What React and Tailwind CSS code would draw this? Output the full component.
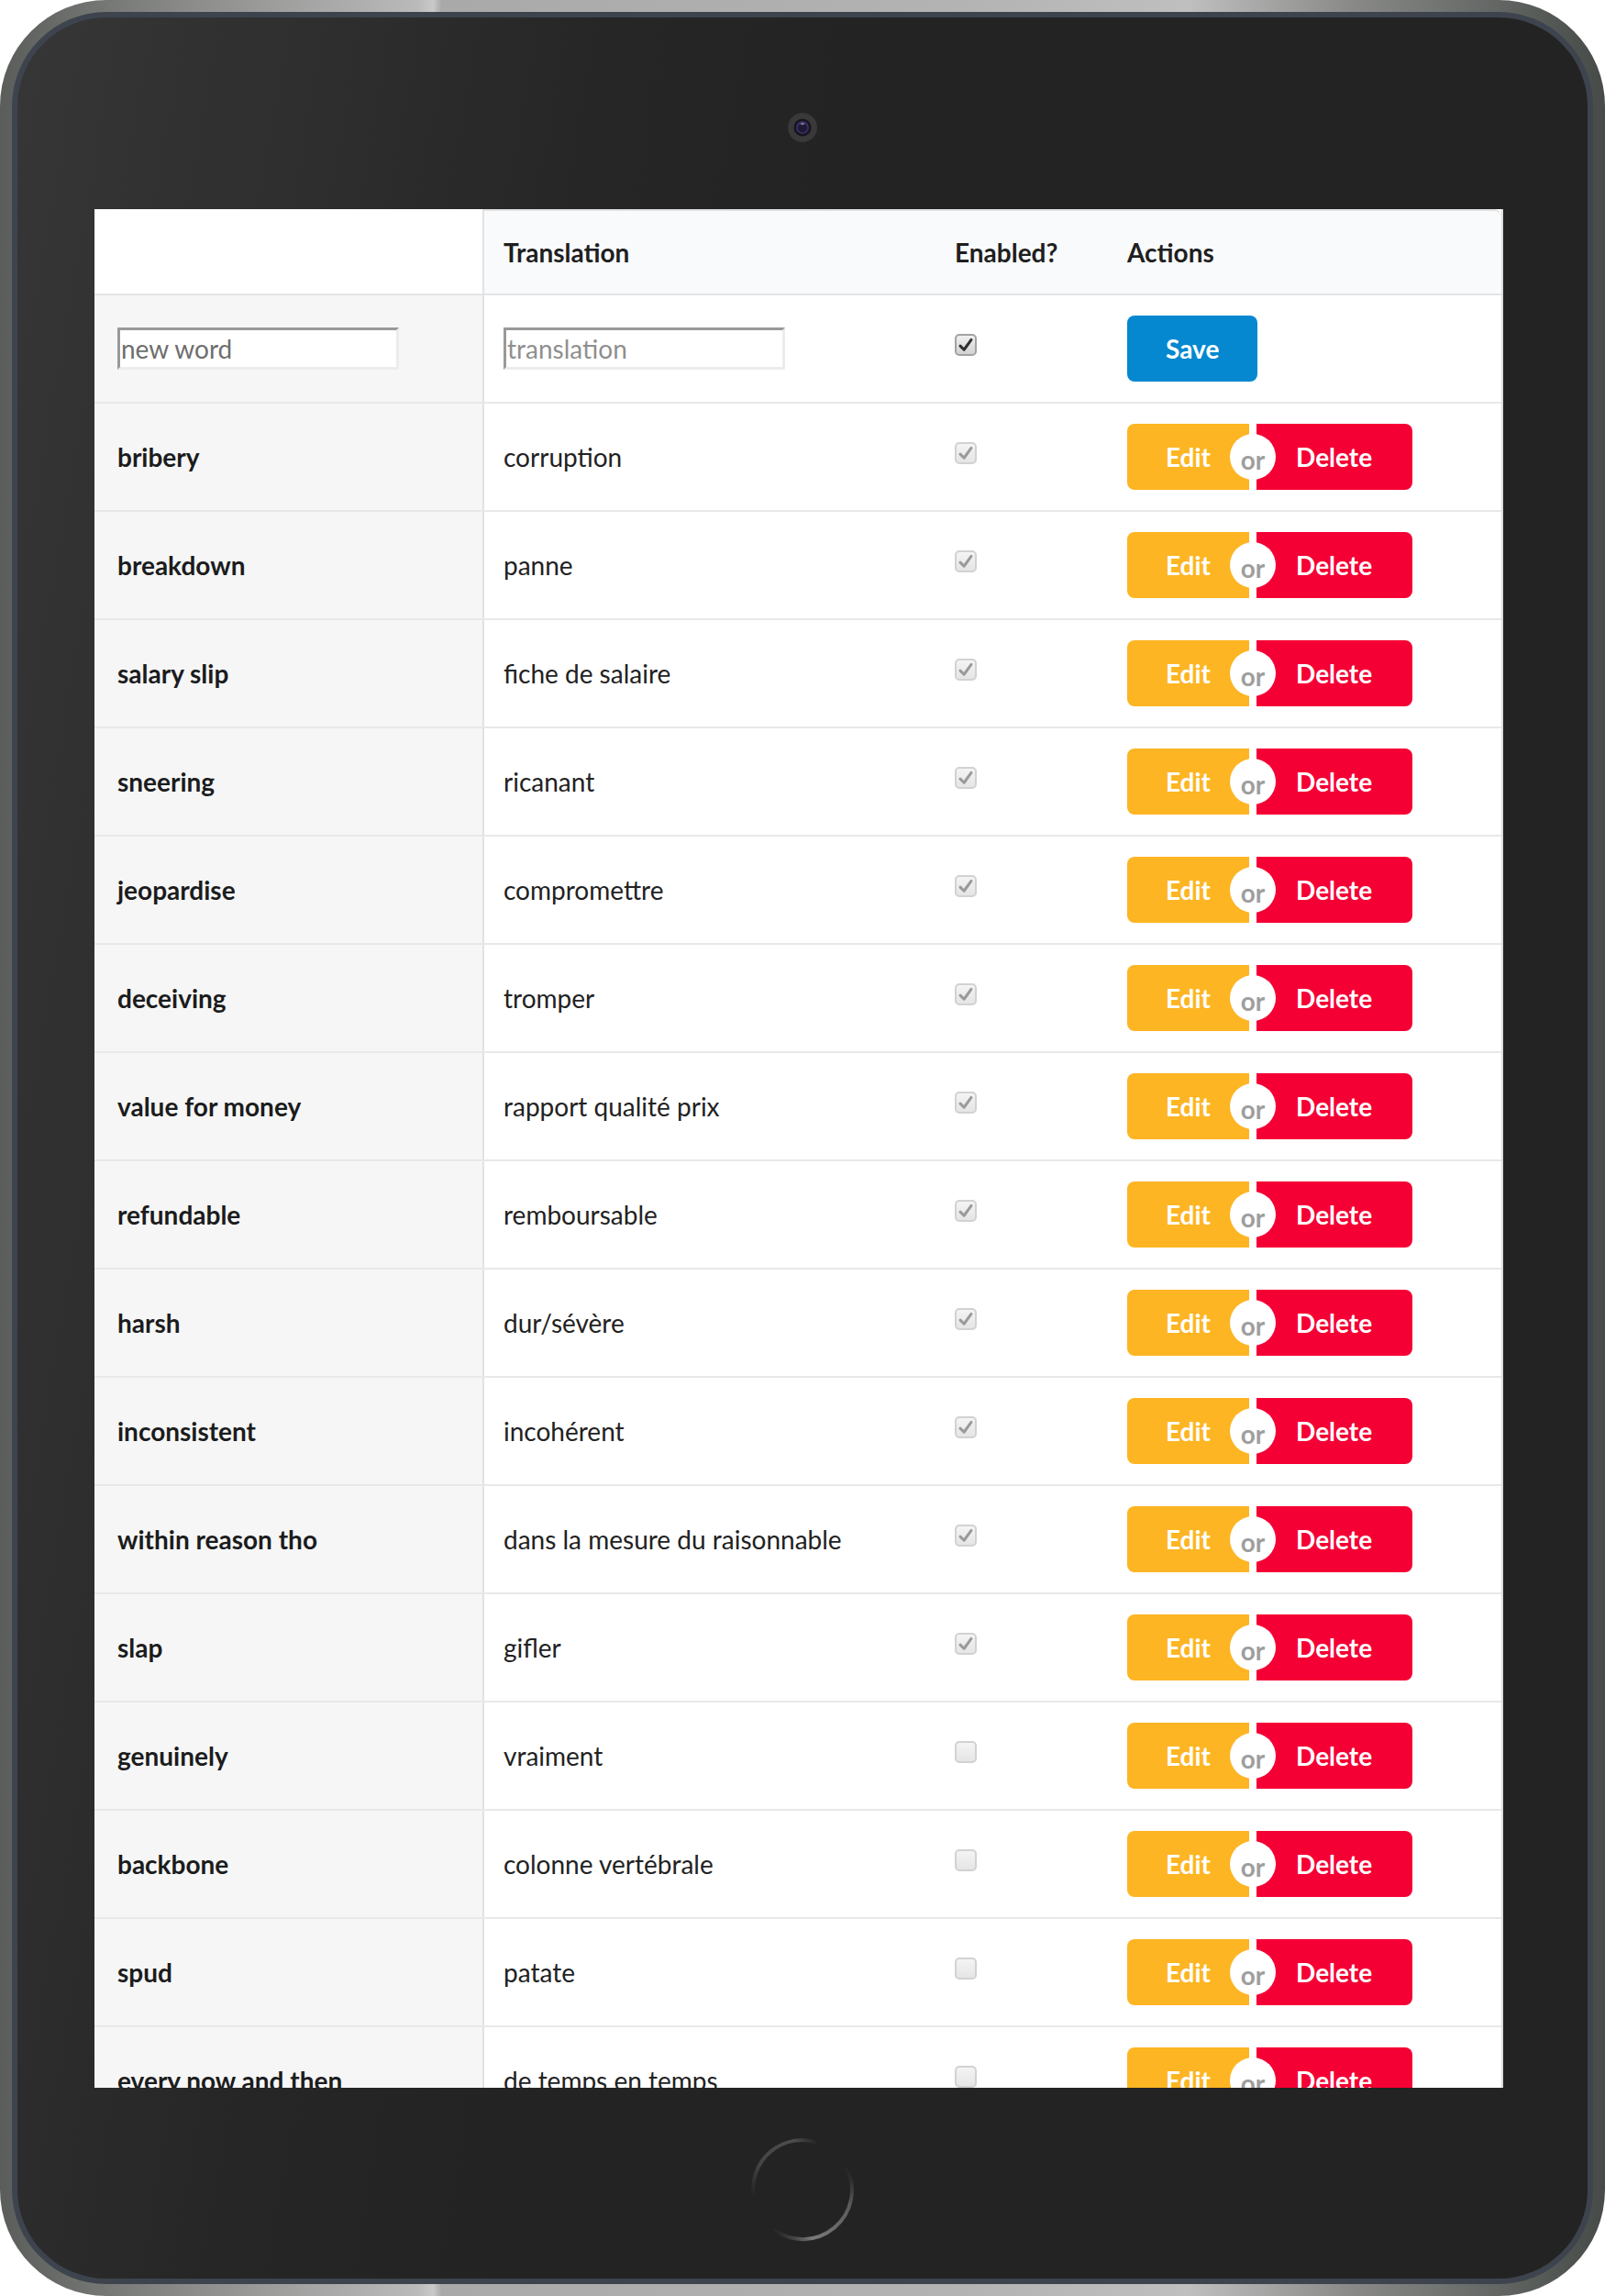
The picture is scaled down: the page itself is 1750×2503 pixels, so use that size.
const words = [
  ['bribery', 'corruption', true],
  ['breakdown', 'panne', true],
  ['salary slip', 'fiche de salaire', true],
  ['sneering', 'ricanant', true],
  ['jeopardise', 'compromettre', true],
  ['deceiving', 'tromper', true],
  ['value for money', 'rapport qualité prix', true],
  ['refundable', 'remboursable', true],
  ['harsh', 'dur/sévère', true],
  ['inconsistent', 'incohérent', true],
  ['within reason tho', 'dans la mesure du raisonnable', true],
  ['slap', 'gifler', true],
  ['genuinely', 'vraiment', false],
  ['backbone', 'colonne vertébrale', false],
  ['spud', 'patate', false],
  ['every now and then', 'de temps en temps', false],
];

const CheckBox = ({ checked, disabled }) => (
  <span
    className={
      disabled
        ? 'flex h-[24px] w-[24px] items-center justify-center rounded-[5px] border-2 border-[#d2d2d2] bg-[linear-gradient(#f4f4f4,#e5e5e5)]'
        : 'flex h-[24px] w-[24px] items-center justify-center rounded-[5px] border-2 border-[#a3a3a3] bg-[linear-gradient(#f0f0f0,#d2d2d2)]'
    }
  >
    {checked && (
      <svg viewBox="0 0 24 24" className="h-[18px] w-[18px]">
        <path
          d="M4 13.5 L9.5 19 L20 4.5"
          fill="none"
          stroke={disabled ? '#9a9a9a' : '#303030'}
          strokeWidth="4"
          strokeLinecap="round"
          strokeLinejoin="round"
        />
      </svg>
    )}
  </span>
);

const ActionButtons = () => (
  <div className="flex h-[72px]">
    <button className="flex h-full items-center rounded-l-[8px] bg-[#fdb523] px-[42px] font-bold text-white">
      Edit
    </button>
    <div className="relative h-full w-[8px]">
      <span className="absolute left-1/2 top-1/2 z-10 flex h-[50px] w-[50px] -translate-x-1/2 -translate-y-1/2 items-center justify-center rounded-full bg-white pt-[6px] font-bold text-[#9e9e9e]">
        or
      </span>
    </div>
    <button className="flex h-full items-center rounded-r-[8px] bg-[#f50035] pl-[43px] pr-[44px] font-bold text-white">
      Delete
    </button>
  </div>
);

const Row = ({ word, translation, enabled }) => (
  <div className="grid h-[118px] shrink-0 grid-cols-[423px_493px_188px_430px] border-b-2 border-[#e8e8e9]">
    <div className="flex items-center bg-[#f6f6f6] pl-[25px] font-bold text-[#1b1c1d]">{word}</div>
    <div className="flex items-center border-l-2 border-[#e2e2e3] pl-[21px] text-[#222]">{translation}</div>
    <div className="flex items-center pl-[22px]">
      <span className="mb-[8px]">
        <CheckBox checked={enabled} disabled />
      </span>
    </div>
    <div className="flex items-center pl-[22px]">
      <ActionButtons />
    </div>
  </div>
);

const Camera = () => (
  <svg width="40" height="40" viewBox="0 0 40 40">
    <circle cx="20" cy="20" r="16" fill="#393939" />
    <circle cx="20" cy="20" r="9.5" fill="#16141d" />
    <circle cx="20" cy="20" r="7" fill="#3b2d66" />
    <circle cx="20" cy="20.5" r="5" fill="#1f1833" />
    <ellipse cx="20" cy="16" rx="2.2" ry="1.2" fill="#b9b2d6" opacity="0.55" />
  </svg>
);

// two fading arcs, like the reference's ring
const HomeButton = () => (
  <svg width="116" height="116" viewBox="0 0 116 116">
    <defs>
      <linearGradient id="ringLeft" gradientUnits="userSpaceOnUse" x1="4" y1="66" x2="75" y2="6">
        <stop offset="0" stopColor="#454545" stopOpacity="0" />
        <stop offset="0.3" stopColor="#444444" />
        <stop offset="0.8" stopColor="#4d4d4d" />
        <stop offset="1" stopColor="#4d4d4d" stopOpacity="0" />
      </linearGradient>
      <linearGradient id="ringRight" gradientUnits="userSpaceOnUse" x1="106" y1="33" x2="25" y2="101">
        <stop offset="0" stopColor="#555555" stopOpacity="0" />
        <stop offset="0.22" stopColor="#5a5a5a" />
        <stop offset="0.75" stopColor="#7a7a7a" />
        <stop offset="1" stopColor="#6a6a6a" stopOpacity="0" />
      </linearGradient>
    </defs>
    <path d="M4.5 65.5 A54 54 0 0 1 74.7 6.6" fill="none" stroke="url(#ringLeft)" strokeWidth="4" />
    <path d="M105.7 32.7 A54 54 0 0 1 24.7 100.6" fill="none" stroke="url(#ringRight)" strokeWidth="4" />
  </svg>
);

export default function App() {
  return (
    <div className="h-[2503px] w-[1750px] font-[Lato,sans-serif] text-[28px]">
      <div className="h-full w-full rounded-[116px] bg-[linear-gradient(90deg,#5a5d5a_0%,#8c8d8b_12%,#bababa_26%,#c9c9c9_27%,#a9a9a9_27.5%,#b3b3b3_60%,#bfbfbf_74%,#8a8b89_84%,#464b48_100%)] p-[13px]">
        <div className="h-full w-full rounded-[103px] bg-[#3e444e] p-[6px]">
          <div className="flex h-full w-full flex-col overflow-hidden rounded-[97px] bg-[linear-gradient(100deg,#363636_0%,#2d2d2d_18%,#262626_30%,#232323_45%,#232323_100%)]">
            {/* camera */}
            <div className="flex h-[209px] shrink-0 justify-center pt-[100px]">
              <Camera />
            </div>

            {/* screen */}
            <div className="ml-[84px] flex h-[2048px] w-[1536px] shrink-0 flex-col overflow-hidden border-r-2 border-[#dcdcdd] bg-white">
              {/* header */}
              <div className="grid h-[94px] shrink-0 grid-cols-[423px_493px_188px_430px] border-b-2 border-[#e4e4e5] font-bold text-[#1f1f1f]">
                <div className="bg-white" />
                <div className="flex items-center border-l-2 border-t-2 border-[#e2e2e3] bg-[#f9fafb] pl-[21px]">Translation</div>
                <div className="flex items-center border-t-2 border-[#e2e2e3] bg-[#f9fafb] pl-[22px]">Enabled?</div>
                <div className="flex items-center rounded-tr-[8px] border-t-2 border-[#e2e2e3] bg-[#f9fafb] pl-[22px]">Actions</div>
              </div>

              {/* new word row */}
              <div className="grid h-[118px] shrink-0 grid-cols-[423px_493px_188px_430px] border-b-2 border-[#e8e8e9]">
                <div className="flex items-center bg-[#f6f6f6] pl-[25px]">
                  <input
                    placeholder="new word"
                    className="h-[46px] w-[307px] border-[3px] border-b-[#ececec] border-l-[#999] border-r-[#ececec] border-t-[#999] bg-white px-[1px] text-[28px] outline-none placeholder:text-[#6e6e6e]"
                  />
                </div>
                <div className="flex items-center border-l-2 border-[#e2e2e3] pl-[21px]">
                  <input
                    placeholder="translation"
                    className="h-[46px] w-[307px] border-[3px] border-b-[#ececec] border-l-[#999] border-r-[#ececec] border-t-[#999] bg-white px-[1px] text-[28px] outline-none placeholder:text-[#8f8f8f]"
                  />
                </div>
                <div className="flex items-center pl-[22px]">
                  <span className="mb-[8px]">
                    <CheckBox checked />
                  </span>
                </div>
                <div className="flex items-center pl-[22px]">
                  <button className="flex h-[72px] items-center rounded-[8px] bg-[#0588cf] px-[42px] font-bold text-white">
                    Save
                  </button>
                </div>
              </div>

              {words.map(([word, translation, enabled]) => (
                <Row key={word} word={word} translation={translation} enabled={enabled} />
              ))}
            </div>

            {/* home button */}
            <div className="flex flex-1 justify-center pt-[53px]">
              <HomeButton />
            </div>
          </div>
        </div>
      </div>
    </div>
  );
}
